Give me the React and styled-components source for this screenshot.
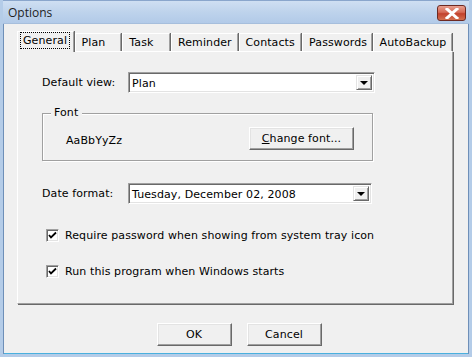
import React from "react";
import styled, { createGlobalStyle } from "styled-components";

const GlobalStyle = createGlobalStyle`
  html, body {
    margin: 0;
    padding: 0;
    background: #f0f0f0;
  }
  body {
    font-family: "DejaVu Sans", Verdana, sans-serif;
    font-size: 11px;
    letter-spacing: 0.1px;
    color: #000;
  }
`;

const tabs = ["General", "Plan", "Task", "Reminder", "Contacts", "Passwords", "AutoBackup"];
const tabWidths = [57, 47, 48, 67, 63, 70, 80];

const Options = () => (
  <Window>
    <GlobalStyle />
    <TitleBar>
      <Title>Options</Title>
      <CloseButton>
        <svg width="14" height="11" viewBox="0 0 14 11">
          <path d="M2 1 L12 10 M12 1 L2 10" stroke="#fff" strokeWidth="3" strokeLinecap="square" />
        </svg>
      </CloseButton>
    </TitleBar>
    <Body>
      <TabRow>
        {tabs.map((t, i) => (
          <Tab key={t} active={i === 0} style={{ width: tabWidths[i] }}>
            {i === 0 ? <Focus>{t}</Focus> : t}
          </Tab>
        ))}
      </TabRow>
      <Panel>
        <FieldRow>
          <Label>Default view:</Label>
          <Combo width={247}>
            <ComboText>Plan</ComboText>
            <DropButton>
              <Arrow />
            </DropButton>
          </Combo>
        </FieldRow>
        <GroupBox>
          <Legend>Font</Legend>
          <GroupInner>
            <Sample>AaBbYyZz</Sample>
            <PushButton width={105}>
              <u>C</u>hange font...
            </PushButton>
          </GroupInner>
        </GroupBox>
        <FieldRow spaced>
          <Label>Date format:</Label>
          <Combo width={244}>
            <ComboText>Tuesday, December 02, 2008</ComboText>
            <DropButton>
              <Arrow />
            </DropButton>
          </Combo>
        </FieldRow>
        <CheckRow gapTop={25}>
          <CheckBox>
            <svg width="9" height="9" viewBox="0 0 9 9">
              <path d="M1 4 L3 6.5 L8 1.5" stroke="#000" strokeWidth="1.8" fill="none" />
            </svg>
          </CheckBox>
          Require password when showing from system tray icon
        </CheckRow>
        <CheckRow gapTop={23}>
          <CheckBox>
            <svg width="9" height="9" viewBox="0 0 9 9">
              <path d="M1 4 L3 6.5 L8 1.5" stroke="#000" strokeWidth="1.8" fill="none" />
            </svg>
          </CheckBox>
          Run this program when Windows starts
        </CheckRow>
      </Panel>
      <Footer>
        <PushButton width={75}>OK</PushButton>
        <PushButton width={75}>Cancel</PushButton>
      </Footer>
    </Body>
  </Window>
);

const Window = styled.div`
  width: 472px;
  height: 357px;
  box-sizing: border-box;
  background: #f0f0f0;
  border-left: 3px solid #b4cce8;
  border-right: 3px solid #b4cce8;
  border-bottom: 3px solid #b4cce8;
  box-shadow: inset 1px 0 0 #6e8fb8, inset -1px 0 0 #6e8fb8, inset 0 -1px 0 #4ab0de;
  display: flex;
  flex-direction: column;
  overflow: hidden;
`;

const TitleBar = styled.div`
  height: 22px;
  margin: 0 -3px;
  padding: 0 6px 0 8px;
  display: flex;
  align-items: center;
  justify-content: space-between;
  background: linear-gradient(#cfdff2 0%, #bed3ec 50%, #b2cae8 100%);
  border-top: 1px solid #8aa6cc;
  border-bottom: 1px solid #a6bedc;
`;

const Title = styled.div`
  font-family: "Open Sans", "DejaVu Sans", sans-serif;
  font-size: 12px;
  letter-spacing: 0;
  color: #1e1e1e;
`;

const CloseButton = styled.div`
  width: 29px;
  height: 16px;
  box-sizing: border-box;
  border: 1px solid #6d2a22;
  border-radius: 3px;
  background: linear-gradient(#e8a090 0%, #d66a55 45%, #c2412c 55%, #d2704f 100%);
  display: flex;
  align-items: center;
  justify-content: center;
  margin-top: 2px;
`;

const Body = styled.div`
  flex: 1;
  display: flex;
  flex-direction: column;
  padding: 7px 16px 0 14px;
`;

const TabRow = styled.div`
  display: flex;
  align-items: flex-end;
  height: 20px;
  position: relative;
  z-index: 1;
`;

const Tab = styled.div`
  box-sizing: border-box;
  height: ${(p) => (p.active ? "21px" : "18px")};
  margin-bottom: ${(p) => (p.active ? "-1px" : "0")};
  padding: ${(p) => (p.active ? "2px 2px 0 3px" : "2px 0 0 6px")};
  background: #f0f0f0;
  border-top: 1px solid #fff;
  border-left: 1px solid #fff;
  border-right: 1px solid #a0a0a0;
  box-shadow: 1px 0 0 #696969;
  margin-right: 1px;
  white-space: nowrap;
`;

const Focus = styled.span`
  outline: 1px dotted #000;
  padding: 1px 2px;
`;

const Panel = styled.div`
  height: 253px;
  box-sizing: border-box;
  width: 436px;
  border-top: 1px solid #fff;
  border-left: 1px solid #fff;
  border-right: 1px solid #a0a0a0;
  border-bottom: 1px solid #a0a0a0;
  box-shadow: 1px 1px 0 #696969;
  padding: 20px 0 0 24px;
  display: flex;
  flex-direction: column;
`;

const FieldRow = styled.div`
  display: flex;
  align-items: center;
  margin-top: ${(p) => (p.spaced ? "22px" : "0")};
`;

const Label = styled.div`
  width: 86px;
`;

const Combo = styled.div`
  width: ${(p) => p.width}px;
  height: 21px;
  box-sizing: border-box;
  background: #fff;
  border-top: 1px solid #a0a0a0;
  border-left: 1px solid #a0a0a0;
  border-right: 1px solid #fff;
  border-bottom: 1px solid #fff;
  box-shadow: inset 1px 1px 0 #696969, inset -1px -1px 0 #e3e3e3;
  display: flex;
  align-items: center;
  padding: 2px 2px 2px 3px;
`;

const ComboText = styled.div`
  flex: 1;
  padding-top: 1px;
`;

const DropButton = styled.div`
  width: 16px;
  height: 15px;
  box-sizing: border-box;
  background: #f0f0f0;
  border-top: 1px solid #e3e3e3;
  border-left: 1px solid #e3e3e3;
  border-right: 1px solid #696969;
  border-bottom: 1px solid #696969;
  box-shadow: inset 1px 1px 0 #fff, inset -1px -1px 0 #a0a0a0;
  display: flex;
  align-items: center;
  justify-content: center;
`;

const Arrow = styled.div`
  width: 0;
  height: 0;
  border-left: 4px solid transparent;
  border-right: 4px solid transparent;
  border-top: 4px solid #000;
`;

const GroupBox = styled.div`
  position: relative;
  margin-top: 20px;
  width: 331px;
  height: 48px;
  box-sizing: border-box;
  border: 1px solid #a0a0a0;
  box-shadow: 1px 1px 0 #fff, inset 1px 1px 0 #fff;
`;

const Legend = styled.div`
  position: absolute;
  top: -8px;
  left: 8px;
  padding: 0 4px 0 3px;
  background: #f0f0f0;
`;

const GroupInner = styled.div`
  display: flex;
  align-items: center;
  justify-content: space-between;
  padding: 13px 18px 0 23px;
`;

const Sample = styled.div`
  padding-top: 3px;
`;

const PushButton = styled.div`
  width: ${(p) => p.width}px;
  height: 23px;
  box-sizing: border-box;
  background: #f0f0f0;
  border-top: 1px solid #fff;
  border-left: 1px solid #fff;
  border-right: 1px solid #696969;
  border-bottom: 1px solid #696969;
  box-shadow: inset -1px -1px 0 #a0a0a0, inset 1px 1px 0 #e3e3e3;
  display: flex;
  align-items: center;
  justify-content: center;
`;

const CheckRow = styled.div`
  display: flex;
  align-items: center;
  gap: 6px;
  margin-left: 4px;
  margin-top: ${(p) => p.gapTop}px;
`;

const CheckBox = styled.div`
  width: 13px;
  height: 13px;
  box-sizing: border-box;
  background: #fff;
  border-top: 1px solid #a0a0a0;
  border-left: 1px solid #a0a0a0;
  border-right: 1px solid #fff;
  border-bottom: 1px solid #fff;
  box-shadow: inset 1px 1px 0 #696969, inset -1px -1px 0 #e3e3e3;
  display: flex;
  align-items: center;
  justify-content: center;
`;

const Footer = styled.div`
  display: flex;
  justify-content: center;
  gap: 15px;
  padding-top: 19px;
  padding-left: 8px;
`;

export default Options;
